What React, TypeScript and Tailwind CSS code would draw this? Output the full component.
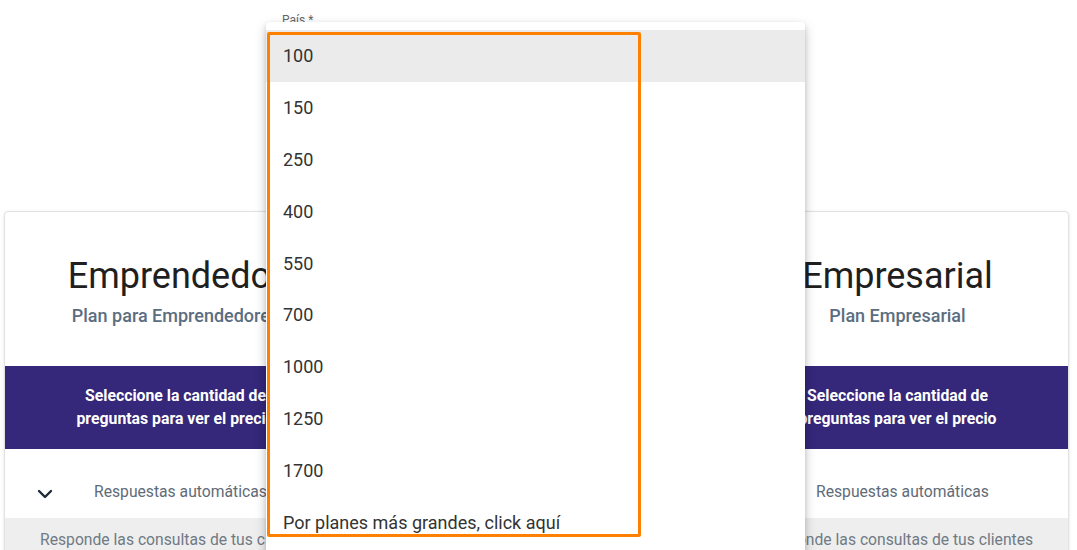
import React from "react";

const items = ["100", "150", "250", "400", "550", "700", "1000", "1250", "1700", "Por planes más grandes, click aquí"];

function Chevron() {
  return (
    <svg width="16" height="10" viewBox="0 0 16 10" fill="none">
      <path d="M2 2l6 6 6-6" stroke="#1f2937" strokeWidth="2.4" strokeLinecap="round" strokeLinejoin="round" />
    </svg>
  );
}

function Card({ title, subtitle }: { title: string; subtitle: string }) {
  return (
    <div className="w-[343px] shrink-0 bg-white border border-[#e2e2e2] rounded-[4px] shadow-[0_1px_3px_rgba(0,0,0,0.12)] overflow-hidden">
      <div className="pt-[42px] pb-[38px] flex flex-col items-center">
        <div className="text-[36px] leading-[44px] text-[#1f1f1f] font-normal">{title}</div>
        <div className="mt-[6px] text-[18px] leading-[24px] font-medium text-[#5b6e7f]">{subtitle}</div>
      </div>
      <div className="bg-[#35277a] pt-[18px] pb-[19px] text-center text-white font-bold text-[15.8px] leading-[23px]">
        <div>Seleccione la cantidad de</div>
        <div>preguntas para ver el precio</div>
      </div>
      <div className="h-[69px] flex items-start pt-[31px] pl-[32px]">
        <div className="w-[16px] flex justify-center mt-[9px]">
          <Chevron />
        </div>
        <div className="ml-[41px] text-[15.7px] leading-[24px] text-[#5f6b77]">Respuestas automáticas</div>
      </div>
      <div className="bg-[#eeeeee] h-[40px] pl-[35px] pt-[10px] text-[15.7px] leading-[24px] text-[#707a85] whitespace-nowrap">
        Responde las consultas de tus clientes
      </div>
    </div>
  );
}

export default function App() {
  return (
    <div className="relative w-full h-[550px] overflow-hidden bg-white" style={{ fontFamily: "Roboto, 'Noto Sans', sans-serif" }}>
      <div className="h-[211px] pl-[282px] pt-[12px] text-[12px] leading-[16px] text-[#666]">País *</div>
      <div className="flex gap-[18px] pl-[4px]">
        <Card title="Emprendedor" subtitle="Plan para Emprendedores" />
        <Card title="Profesional" subtitle="Plan Profesional" />
        <Card title="Empresarial" subtitle="Plan Empresarial" />
      </div>

      <div className="absolute left-[266px] top-[22px] w-[539px] h-[560px] bg-white rounded-[4px] shadow-[0_5px_12px_rgba(0,0,0,0.22),0_2px_5px_rgba(0,0,0,0.12)] pt-[8px]">
        {items.map((it, i) => (
          <div
            key={it}
            className={`h-[51.8px] flex items-center pl-[17px] text-[18px] text-[#333333] ${i === 0 ? "bg-[#ebebeb]" : ""}`}
          >
            {it}
          </div>
        ))}
      </div>

      <div className="absolute left-[267px] top-[32px] w-[374px] h-[505px] border-[3px] border-[#ff8000] rounded-[2px]" />
    </div>
  );
}
